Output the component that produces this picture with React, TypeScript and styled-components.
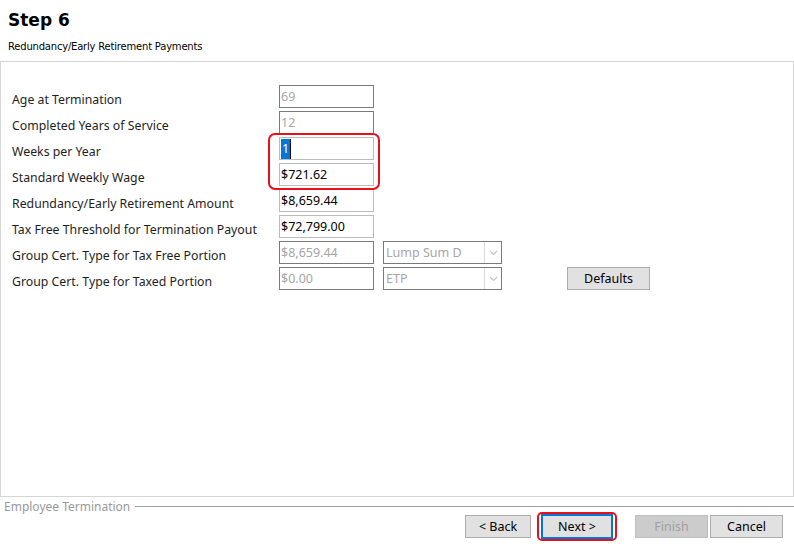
import React, { FunctionComponent } from 'react';
import styled, { createGlobalStyle } from 'styled-components';

const UI_FONT = `'Noto Sans', 'Open Sans', 'DejaVu Sans', sans-serif`;

const GlobalStyle = createGlobalStyle`
    html, body {
        margin: 0;
        padding: 0;
        background: #fff;
    }

    body {
        width: 794px;
        height: 546px;
        overflow: hidden;
        font-family: ${UI_FONT};
        color: #000;
    }
`;

const StyledWizard = styled.div`
    display: flex;
    flex-direction: column;
    width: 794px;
    height: 546px;
`;

const StyledHeader = styled.div`
    padding: 9px 8px 0;
    height: 52px;
    box-sizing: border-box;
`;

const StyledTitle = styled.div`
    font-family: 'DejaVu Sans', Verdana, sans-serif;
    font-weight: bold;
    font-size: 17px;
    line-height: 22px;
`;

const StyledSubtitle = styled.div`
    font-family: 'DejaVu Sans', Tahoma, sans-serif;
    font-size: 10px;
    line-height: 14px;
    margin-top: 9px;
    letter-spacing: -0.2px;
`;

const StyledPanel = styled.div`
    border: 1px solid #d5d5d5;
    height: 436px;
    box-sizing: border-box;
    margin-top: 9px;
    padding: 23px 0 0 11px;
`;

const StyledForm = styled.div`
    position: relative;
    display: grid;
    grid-template-columns: 267px 95px 128px 65px 83px;
    grid-auto-rows: 23px;
    row-gap: 3px;
    align-items: center;
`;

const StyledLabel = styled.div`
    font-size: 12.3px;
    color: #1e1e1e;
    line-height: 19px;
    padding-top: 5px;
    white-space: nowrap;
`;

const StyledInput = styled.div<{ $disabled?: boolean }>`
    height: 23px;
    box-sizing: border-box;
    border: 1px solid ${({ $disabled }) => ($disabled ? '#7a7a7a' : '#bcbcbc')};
    color: ${({ $disabled }) => ($disabled ? '#a6a6a6' : '#000')};
    font-size: 12.5px;
    line-height: 20px;
    padding-left: 1px;
    display: flex;
    align-items: center;
    white-space: nowrap;
`;

const StyledSelection = styled.span`
    background: #0078d7;
    color: #fff;
    padding: 0 1px;
    border-right: 1px solid #000;
`;

const StyledSelect = styled.div`
    margin-left: 9px;
    height: 23px;
    box-sizing: border-box;
    border: 1px solid #7a7a7a;
    color: #a6a6a6;
    font-size: 12.5px;
    display: flex;
    align-items: center;
`;

const StyledSelectText = styled.div`
    flex: 1;
    padding-left: 2px;
`;

const StyledSelectArrow = styled.div`
    width: 16px;
    height: 100%;
    border-left: 1px solid #dadada;
    display: flex;
    align-items: center;
    justify-content: center;
`;

const StyledButton = styled.div<{ $disabled?: boolean; $width?: number }>`
    width: ${({ $width }) => $width || 73}px;
    height: 23px;
    box-sizing: border-box;
    border: 1px solid ${({ $disabled }) => ($disabled ? '#bfbfbf' : '#adadad')};
    background: ${({ $disabled }) => ($disabled ? '#cccccc' : '#e1e1e1')};
    color: ${({ $disabled }) => ($disabled ? '#a0a0a0' : '#000')};
    font-size: 12.5px;
    display: flex;
    align-items: center;
    justify-content: center;
    flex-shrink: 0;
`;

const StyledFocusButton = styled(StyledButton)`
    border: 2px solid #0078d7;
    width: 72px;
    height: 25px;
`;

const StyledHighlight = styled.div`
    position: absolute;
    left: 256px;
    top: 48px;
    width: 112px;
    height: 57px;
    box-sizing: border-box;
    border: 2px solid #e8111a;
    border-radius: 7px;
    pointer-events: none;
`;

const StyledRedRing = styled.div`
    border: 2px solid #e8111a;
    border-radius: 5px;
    padding: 0 2px;
    margin: 0 16px 0 4px;
    display: flex;
    flex-shrink: 0;
`;

const StyledFooter = styled.div`
    flex: 1;
    display: flex;
    flex-direction: column;
`;

const StyledGroupLine = styled.div`
    display: flex;
    align-items: center;
    padding-left: 4px;
    height: 18px;
    font-size: 12px;
    color: #9a9a9a;

    &::after {
        content: '';
        flex: 1;
        height: 1px;
        background: #a0a0a0;
        margin-left: 5px;
    }
`;

const StyledButtons = styled.div`
    display: flex;
    align-items: center;
    justify-content: flex-end;
    gap: 2px;
    padding-right: 11px;
    margin-top: -3px;
`;

const Chevron: FunctionComponent = () => (
    <svg width="9" height="6" viewBox="0 0 9 6">
        <path d="M1 1 L4.5 4.5 L8 1" fill="none" stroke="#c4c4c4" strokeWidth="1.1" />
    </svg>
);

interface IRow {
    readonly label: string;
    readonly value: React.ReactNode;
    readonly disabled?: boolean;
    readonly select?: string;
    readonly defaults?: boolean;
}

const ROWS: IRow[] = [
    { label: 'Age at Termination', value: '69', disabled: true },
    { label: 'Completed Years of Service', value: '12', disabled: true },
    { label: 'Weeks per Year', value: <StyledSelection>1</StyledSelection> },
    { label: 'Standard Weekly Wage', value: '$721.62' },
    { label: 'Redundancy/Early Retirement Amount', value: '$8,659.44' },
    { label: 'Tax Free Threshold for Termination Payout', value: '$72,799.00' },
    { label: 'Group Cert. Type for Tax Free Portion', value: '$8,659.44', disabled: true, select: 'Lump Sum D' },
    { label: 'Group Cert. Type for Taxed Portion', value: '$0.00', disabled: true, select: 'ETP', defaults: true }
];

const App: FunctionComponent = () => {
    return (
        <StyledWizard>
            <GlobalStyle />
            <StyledHeader>
                <StyledTitle>Step 6</StyledTitle>
                <StyledSubtitle>Redundancy/Early Retirement Payments</StyledSubtitle>
            </StyledHeader>
            <StyledPanel>
                <StyledForm>
                    {
                        ROWS.map((row) => {
                            return (
                                <React.Fragment key={row.label}>
                                    <StyledLabel>{row.label}</StyledLabel>
                                    <StyledInput $disabled={row.disabled}>{row.value}</StyledInput>
                                    {
                                        row.select ? (
                                            <StyledSelect>
                                                <StyledSelectText>{row.select}</StyledSelectText>
                                                <StyledSelectArrow><Chevron /></StyledSelectArrow>
                                            </StyledSelect>
                                        ) : <div />
                                    }
                                    <div />
                                    {row.defaults ? <StyledButton $width={83}>Defaults</StyledButton> : <div />}
                                </React.Fragment>
                            );
                        })
                    }
                    <StyledHighlight />
                </StyledForm>
            </StyledPanel>
            <StyledFooter>
                <StyledGroupLine>Employee Termination</StyledGroupLine>
                <StyledButtons>
                    <StyledButton $width={66}>&lt; Back</StyledButton>
                    <StyledRedRing>
                        <StyledFocusButton>Next &gt;</StyledFocusButton>
                    </StyledRedRing>
                    <StyledButton $disabled>Finish</StyledButton>
                    <StyledButton>Cancel</StyledButton>
                </StyledButtons>
            </StyledFooter>
        </StyledWizard>
    );
};

export default App;
